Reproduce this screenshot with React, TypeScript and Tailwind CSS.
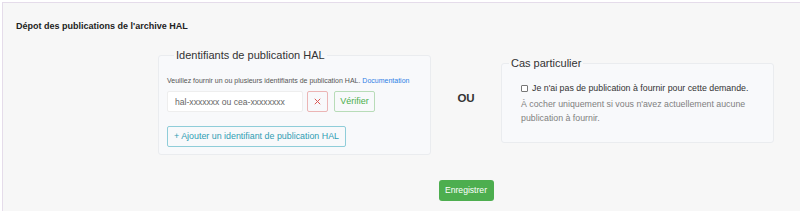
import React from 'react';

const font = { fontFamily: '"Liberation Sans", Arial, sans-serif' };

const CrossIcon: React.FC = () => (
  <svg className="w-[7px] h-[7px]" viewBox="0 0 10 10" fill="none" stroke="currentColor">
    <path strokeWidth={1.4} strokeLinecap="round" d="M1.5 1.5l7 7M8.5 1.5l-7 7" />
  </svg>
);

const HalFieldset: React.FC = () => (
  <fieldset className="w-[273px] h-[107px] border border-[#eaecef] rounded-[3px] bg-[#f8f9fb] p-0 m-0">
    <legend className="ml-[15px] px-[2px] text-[11px] leading-[14px] text-[#333]">
      Identifiants de publication HAL
    </legend>
    <div className="px-[8px] pt-[14px]">
      <p className="text-[7px] leading-[10px] text-[#555]">
        Veuillez fournir un ou plusieurs identifiants de publication HAL.{' '}
        <a href="#doc" className="text-[#2f7fe6]">Documentation</a>
      </p>
      <div className="flex items-center mt-[5px]">
        <input
          className="w-[136px] h-[21px] bg-white border border-[#eeeeee] rounded-[2px] px-[7px] text-[8.6px] text-[#555] placeholder:text-[#666] outline-none"
          placeholder="hal-xxxxxxx ou cea-xxxxxxxx"
        />
        <button className="ml-[4px] w-[21px] h-[21px] flex items-center justify-center border border-[#ebb5b5] rounded-[2px] text-[#d9534f] bg-transparent">
          <CrossIcon />
        </button>
        <button className="ml-[6px] w-[41px] h-[21px] border border-[#b8dcb8] rounded-[2px] text-[9px] text-[#4cae4c] bg-transparent">
          Vérifier
        </button>
      </div>
      <button className="mt-[14px] w-[179px] h-[21px] border border-[#8fcdd9] rounded-[2px] text-[8.9px] text-[#2f9db3] bg-transparent text-left pl-[6px]">
        + Ajouter un identifiant de publication HAL
      </button>
    </div>
  </fieldset>
);

const SpecialFieldset: React.FC = () => (
  <fieldset className="mt-[8px] w-[273px] h-[87px] border border-[#eaecef] rounded-[3px] bg-[#f8f9fb] p-0 m-0">
    <legend className="ml-[7px] px-[2px] text-[11px] leading-[14px] text-[#333]">Cas particulier</legend>
    <div className="pl-[19px] pr-[10px] pt-[12px]">
      <label className="flex items-center gap-[4px] text-[8.8px] leading-[12px] text-[#333]">
        <span className="w-[7px] h-[7px] border border-[#777] rounded-[1px] bg-white shrink-0" />
        Je n'ai pas de publication à fournir pour cette demande.
      </label>
      <p className="mt-[3px] text-[8.8px] leading-[14px] text-[#808080]">
        À cocher uniquement si vous n'avez actuellement aucune publication à fournir.
      </p>
    </div>
  </fieldset>
);

export default function App() {
  return (
    <div className="w-[800px] h-[211px] bg-white pt-[2px] pl-[2px] overflow-hidden" style={font}>
      <div className="h-full border-t border-l border-[#e5dcea] bg-[#f7f7f7]">
        <h1 className="pl-[13px] pt-[16px] text-[9px] leading-[14px] font-bold text-[#222]">
          Dépot des publications de l'archive HAL
        </h1>
        <div className="ml-[155px] w-[616px] mt-[15px]">
          <div className="flex items-start">
            <HalFieldset />
            <div className="w-[70px] pt-[42px] text-center text-[11.5px] font-bold text-[#333]">OU</div>
            <SpecialFieldset />
          </div>
          <div className="flex justify-center mt-[25px]">
            <button className="w-[55px] h-[21px] rounded-[3px] bg-[#4dae4f] text-white text-[8.6px]">
              Enregistrer
            </button>
          </div>
        </div>
      </div>
    </div>
  );
}
